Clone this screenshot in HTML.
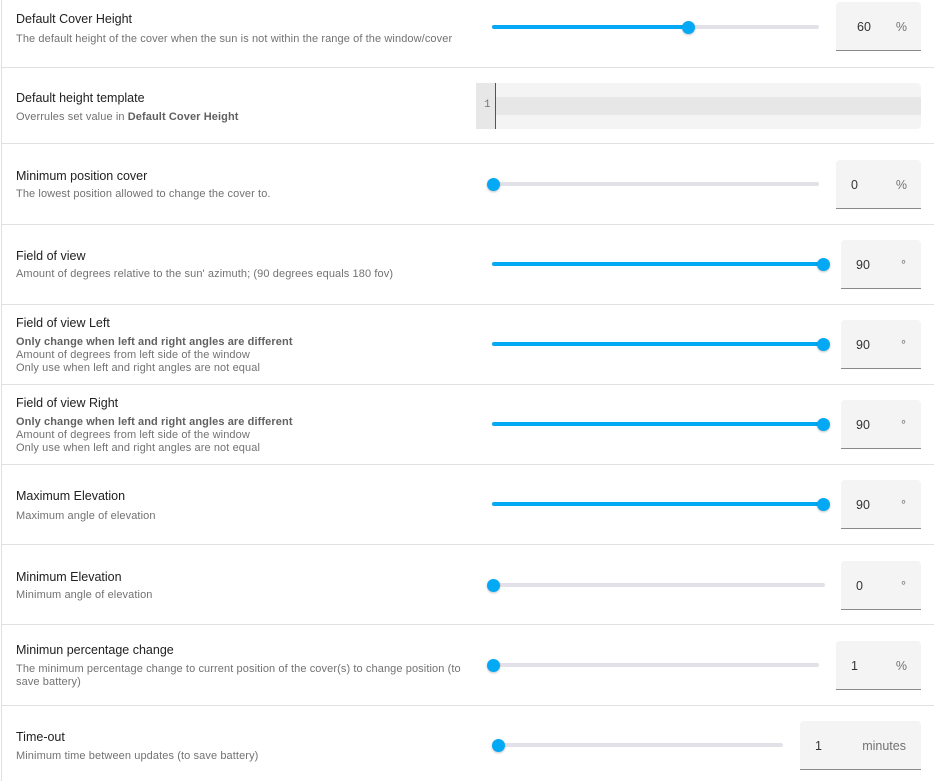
<!DOCTYPE html>
<html><head><meta charset="utf-8"><style>
*{margin:0;padding:0;box-sizing:border-box}
body{width:936px;height:781px;background:#fff;font-family:"Liberation Sans",sans-serif;position:relative;overflow:hidden}
.vl{position:absolute;left:1px;top:0;width:1px;height:781px;background:#e0e0e0}
.div{position:absolute;left:2px;width:932px;height:1px;background:#e0e0e0}
.t{position:absolute;left:16px;font-size:12.5px;color:#212121;white-space:nowrap}
.d{position:absolute;left:16px;font-size:11px;color:#727272;line-height:13px;white-space:nowrap;letter-spacing:0.1px;margin-top:1px}
.d b{color:#616161}
.tr{position:absolute;left:492px;height:4px;border-radius:2px;background:#e2e1e8}
.ac{position:absolute;left:0;top:0;height:4px;border-radius:2px;background:#03a9f4}
.th{position:absolute;width:13px;height:13px;border-radius:50%;background:#03a9f4;box-shadow:0 1px 2px rgba(0,0,0,.25)}
.bx{position:absolute;right:15px;height:49px;background:#f4f4f4;border-bottom:1px solid #8a8a8a;border-radius:4px 4px 0 0;font-size:12.5px;color:#333}
.bx .v{position:absolute;left:15px;top:18px}
.bx .u{position:absolute;right:15px;top:18px;color:#727272}
</style></head><body>
<div class="vl"></div>
<div class="div" style="top:67px"></div>
<div class="div" style="top:143px"></div>
<div class="div" style="top:224px"></div>
<div class="div" style="top:304px"></div>
<div class="div" style="top:384px"></div>
<div class="div" style="top:464px"></div>
<div class="div" style="top:544px"></div>
<div class="div" style="top:624px"></div>
<div class="div" style="top:705px"></div>

<div class="t" style="top:12px">Default Cover Height</div>
<div class="d" style="top:32px">The default height of the cover when the sun is not within the range of the window/cover</div>
<div class="tr" style="top:25px;width:327px"><div class="ac" style="width:196px"></div></div>
<div class="th" style="left:682px;top:21px"></div>
<div class="bx" style="left:836px;top:2px"><span class="v" style="left:21px">60</span><span class="u" style="right:14px">%</span></div>

<div class="t" style="top:91px">Default height template</div>
<div class="d" style="top:110px">Overrules set value in <b>Default Cover Height</b></div>
<div style="position:absolute;left:476px;top:83px;width:445px;height:46px;background:#f4f4f4;border-radius:0 4px 4px 0"></div>
<div style="position:absolute;left:495px;top:97px;width:426px;height:18px;background:#e7e7e7"></div>
<div style="position:absolute;left:476px;top:83px;width:20px;height:46px;background:#e7e7e7;border-right:1px solid #555"></div>
<div style="position:absolute;left:484px;top:99px;font-family:'Liberation Mono',monospace;font-size:11px;color:#777">1</div>

<div class="t" style="top:169px">Minimum position cover</div>
<div class="d" style="top:187px">The lowest position allowed to change the cover to.</div>
<div class="tr" style="top:182px;width:327px"></div>
<div class="th" style="left:487px;top:178px"></div>
<div class="bx" style="left:836px;top:160px"><span class="v">0</span><span class="u" style="right:14px">%</span></div>

<div class="t" style="top:249px">Field of view</div>
<div class="d" style="top:267px">Amount of degrees relative to the sun' azimuth; (90 degrees equals 180 fov)</div>
<div class="tr" style="top:262px;width:331px"><div class="ac" style="width:331px"></div></div>
<div class="th" style="left:817px;top:258px"></div>
<div class="bx" style="left:841px;top:240px"><span class="v">90</span><span class="u">°</span></div>

<div class="t" style="top:316px">Field of view Left</div>
<div class="d" style="top:335px"><b>Only change when left and right angles are different</b><br>Amount of degrees from left side of the window<br>Only use when left and right angles are not equal</div>
<div class="tr" style="top:342px;width:331px"><div class="ac" style="width:331px"></div></div>
<div class="th" style="left:817px;top:338px"></div>
<div class="bx" style="left:841px;top:320px"><span class="v">90</span><span class="u">°</span></div>

<div class="t" style="top:396px">Field of view Right</div>
<div class="d" style="top:415px"><b>Only change when left and right angles are different</b><br>Amount of degrees from left side of the window<br>Only use when left and right angles are not equal</div>
<div class="tr" style="top:422px;width:331px"><div class="ac" style="width:331px"></div></div>
<div class="th" style="left:817px;top:418px"></div>
<div class="bx" style="left:841px;top:400px"><span class="v">90</span><span class="u">°</span></div>

<div class="t" style="top:489px">Maximum Elevation</div>
<div class="d" style="top:509px">Maximum angle of elevation</div>
<div class="tr" style="top:502px;width:331px"><div class="ac" style="width:331px"></div></div>
<div class="th" style="left:817px;top:498px"></div>
<div class="bx" style="left:841px;top:480px"><span class="v">90</span><span class="u">°</span></div>

<div class="t" style="top:570px">Minimum Elevation</div>
<div class="d" style="top:588px">Minimum angle of elevation</div>
<div class="tr" style="top:583px;width:333px"></div>
<div class="th" style="left:487px;top:579px"></div>
<div class="bx" style="left:841px;top:561px"><span class="v">0</span><span class="u">°</span></div>

<div class="t" style="top:643px">Minimun percentage change</div>
<div class="d" style="top:662px">The minimum percentage change to current position of the cover(s) to change position (to<br>save battery)</div>
<div class="tr" style="top:663px;width:327px"></div>
<div class="th" style="left:487px;top:659px"></div>
<div class="bx" style="left:836px;top:641px"><span class="v">1</span><span class="u" style="right:14px">%</span></div>

<div class="t" style="top:730px">Time-out</div>
<div class="d" style="top:749px">Minimum time between updates (to save battery)</div>
<div class="tr" style="top:743px;width:291px"></div>
<div class="th" style="left:492px;top:739px"></div>
<div class="bx" style="left:800px;top:721px"><span class="v">1</span><span class="u">minutes</span></div>
</body></html>
